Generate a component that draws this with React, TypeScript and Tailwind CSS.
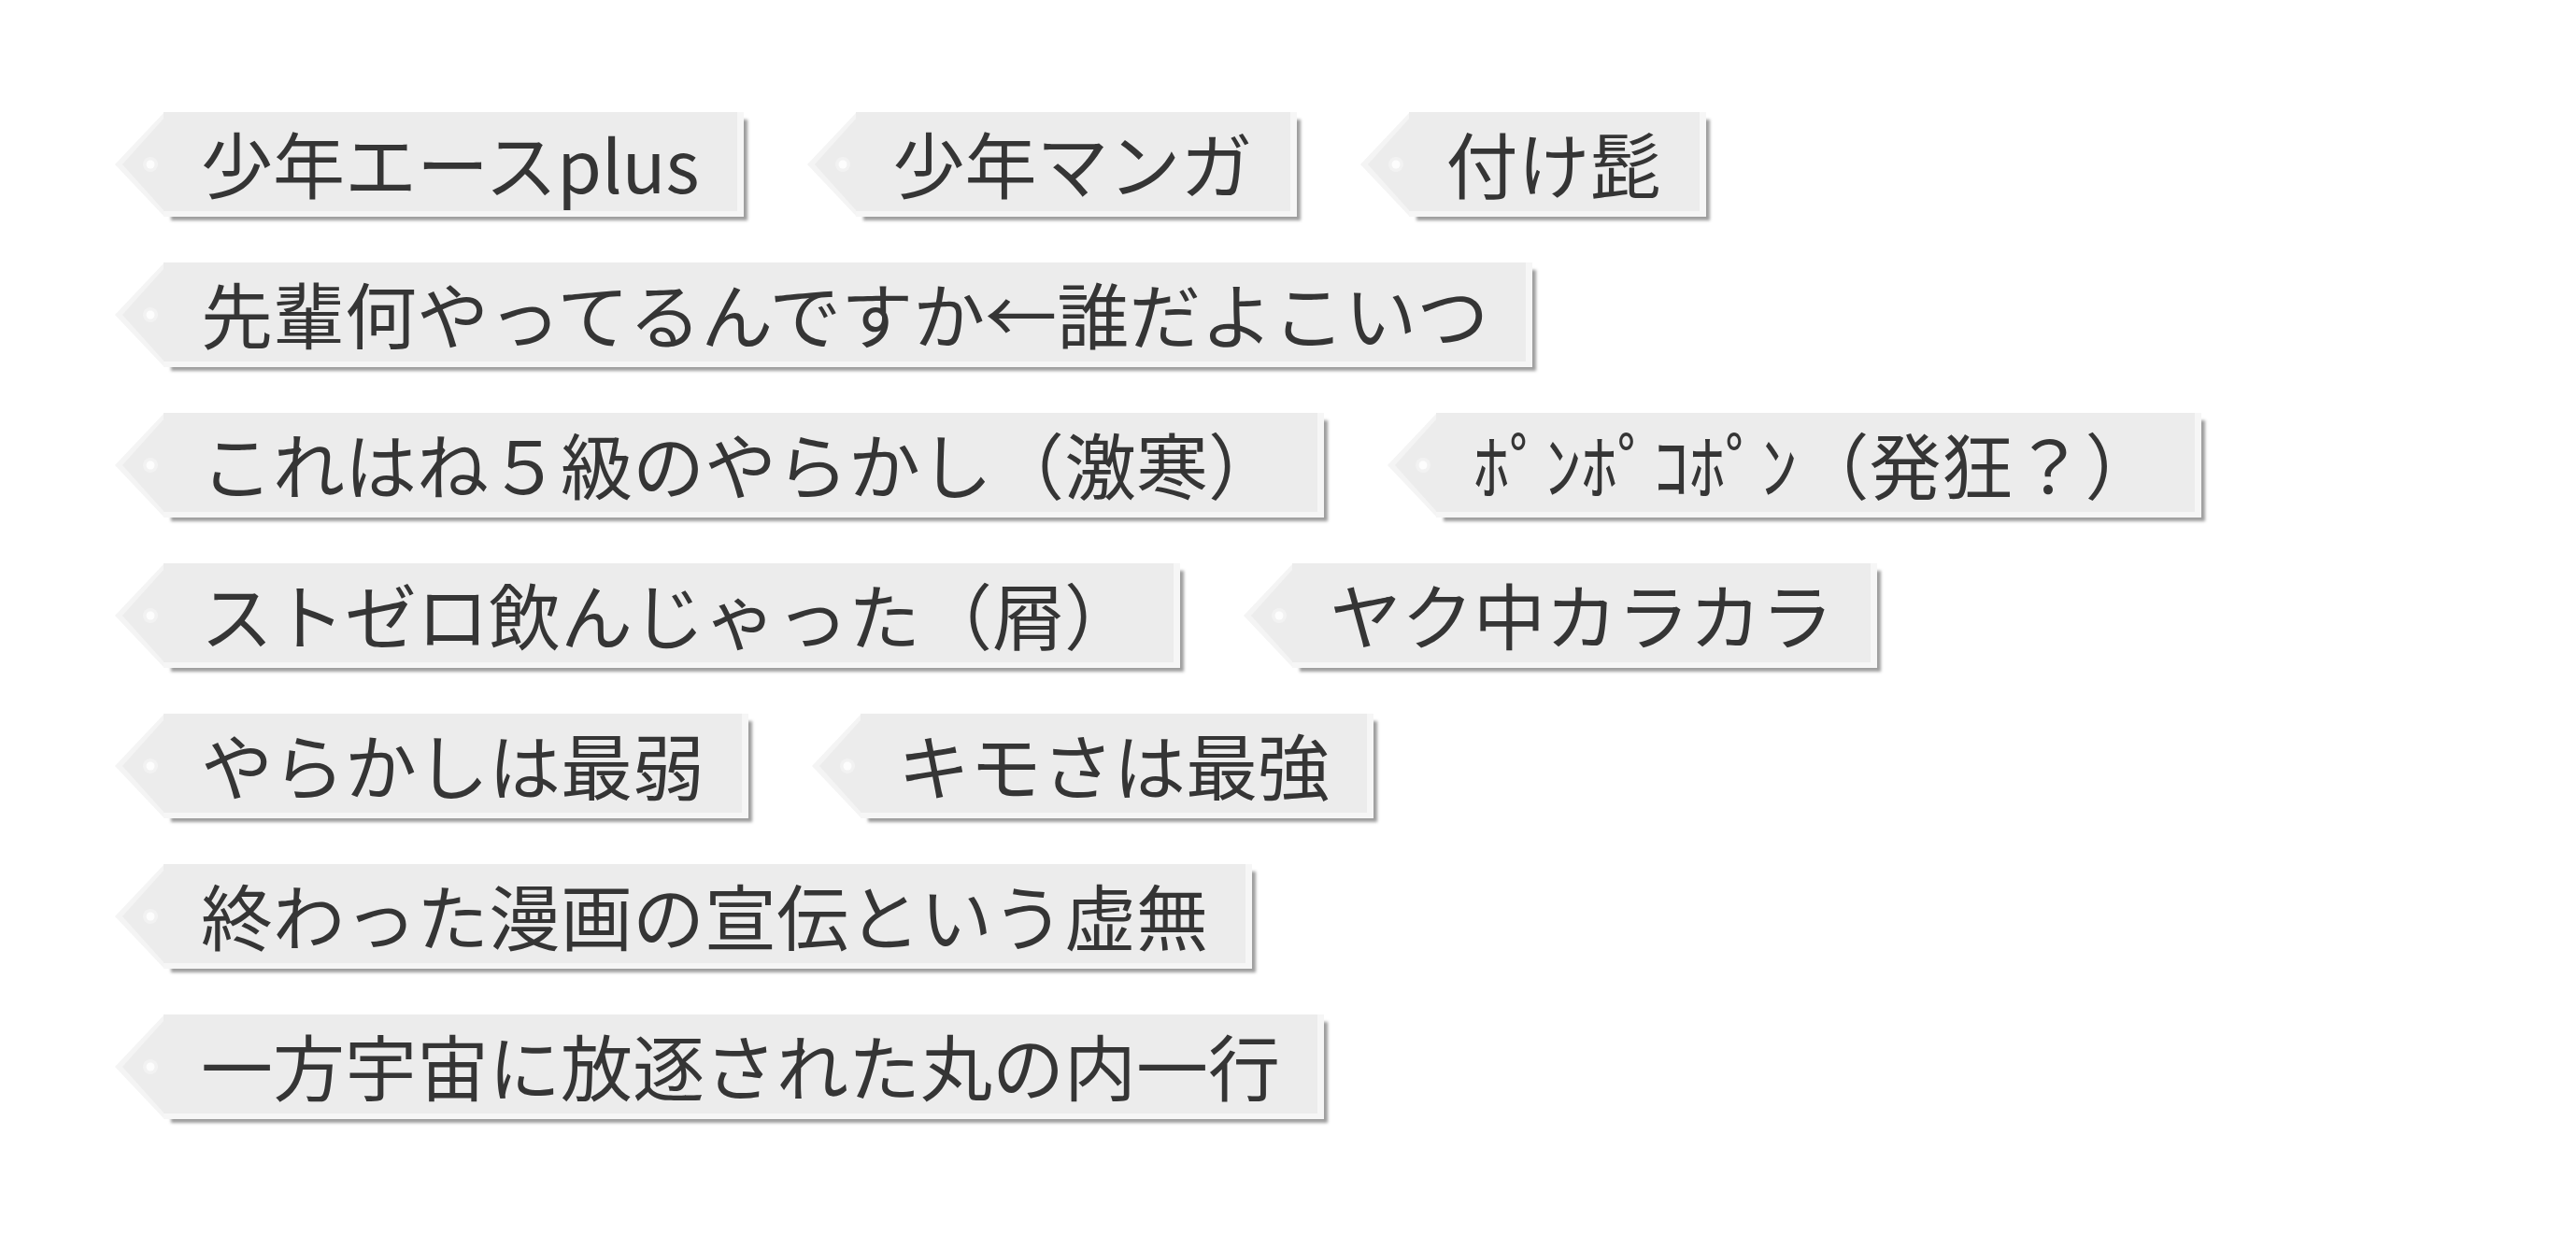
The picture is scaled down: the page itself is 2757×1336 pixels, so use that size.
import type { ReactNode } from "react";

const rows: string[][] = [
  ["少年エースplus", "少年マンガ", "付け髭"],
  ["先輩何やってるんですか←誰だよこいつ"],
  ["これはね５級のやらかし（激寒）", "ﾎﾟﾝﾎﾟｺﾎﾟﾝ（発狂？）"],
  ["ストゼロ飲んじゃった（屑）", "ヤク中カラカラ"],
  ["やらかしは最弱", "キモさは最強"],
  ["終わった漫画の宣伝という虚無"],
  ["一方宇宙に放逐された丸の内一行"],
];

function TagPoint() {
  return (
    <svg width="52" height="112" viewBox="0 0 52 112" className="block shrink-0">
      <polygon points="53,0 0,56 53,112" fill="#f4f4f4" />
      <polygon points="53,6 8,56 53,106" fill="#ececec" />
      <circle cx="38" cy="56" r="8" fill="#f2f2f2" />
      <circle cx="38" cy="56" r="4.5" fill="#fdfdfd" />
    </svg>
  );
}

function Tag({ children }: { children: ReactNode }) {
  return (
    <div className="flex items-stretch">
      <TagPoint />
      <div className="flex h-[112px] items-center bg-[#ececec] pl-[40px] pr-[40px] border-r-[7px] border-b-[6px] border-[#f6f6f6] shadow-[6px_6px_3px_-2px_rgba(0,0,0,0.38)]">
        <span className="text-[77px] leading-none text-[#353535] whitespace-nowrap">{children}</span>
      </div>
    </div>
  );
}

export default function App() {
  return (
    <div
      className="min-h-screen w-full bg-white pl-[123px] pt-[120px]"
      style={{ fontFamily: '"Noto Sans CJK JP", "Noto Sans", sans-serif' }}
    >
      <div className="flex flex-col gap-[49px]">
        {rows.map((row, i) => (
          <div key={i} className="flex gap-[68px]">
            {row.map((t) => (
              <Tag key={t}>{t}</Tag>
            ))}
          </div>
        ))}
      </div>
    </div>
  );
}
